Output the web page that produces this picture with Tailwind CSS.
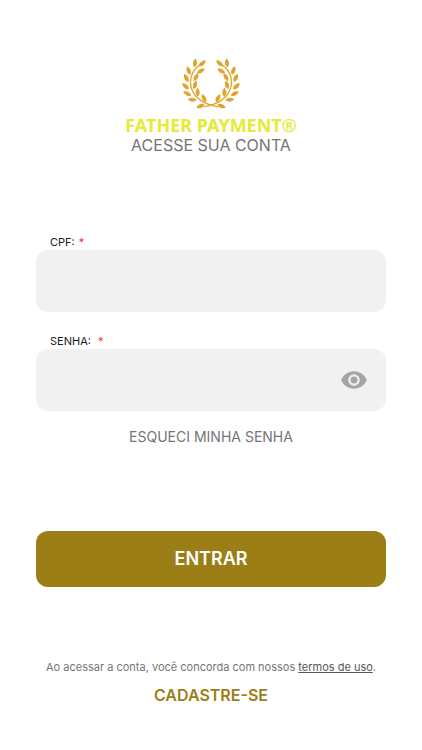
<!DOCTYPE html>
<html lang="pt-BR">
<head>
<meta charset="utf-8">
<meta name="viewport" content="width=device-width, initial-scale=1">
<title>Father Payment</title>
<script src="https://cdn.jsdelivr.net/npm/@tailwindcss/browser@4"></script>
</head>
<body class="bg-white font-['Inter','Liberation_Sans',sans-serif] text-[#757575]">
<main class="flex min-h-screen flex-col px-9 pt-[52px] pb-10">
  <header class="flex flex-col items-center">
    <svg class="h-[62px] w-[70px]" viewBox="0 0 210 186" fill="#dfa52f" aria-hidden="true">
      <defs>
        <path id="leaf" d="M0 13C-8 6-8-5 0-14C8-5 8 6 0 13Z"/>
        <g id="branch">
          <path d="M124 164C87 157 58 141 47 111C38 86 46 57 71 39" fill="none" stroke="#dfa52f" stroke-width="4" stroke-linecap="round"/>
          <use href="#leaf" transform="translate(79 34) rotate(48)"/>
          <use href="#leaf" transform="translate(57 33) rotate(8)"/>
          <use href="#leaf" transform="translate(74 57) rotate(60)"/>
          <use href="#leaf" transform="translate(38 56) rotate(-20)"/>
          <use href="#leaf" transform="translate(60 76) rotate(30)"/>
          <use href="#leaf" transform="translate(31 78) rotate(-28)"/>
          <use href="#leaf" transform="translate(57 99) rotate(15)"/>
          <use href="#leaf" transform="translate(29 103) rotate(-48)"/>
          <use href="#leaf" transform="translate(65 121) rotate(-2)"/>
          <use href="#leaf" transform="translate(34 125) rotate(-63)"/>
          <use href="#leaf" transform="translate(84 139) rotate(-28)"/>
          <use href="#leaf" transform="translate(49 143) rotate(-86)"/>
          <use href="#leaf" transform="translate(74 162) rotate(-112)"/>
        </g>
      </defs>
      <use href="#branch"/>
      <use href="#branch" transform="translate(210 0) scale(-1 1)"/>
    </svg>
    <p class="font-['Noto_Sans',sans-serif] text-[18px] leading-[22px] font-bold text-[#e5ea36]">FATHER PAYMENT®</p>
    <h1 class="text-base leading-[18px]">ACESSE SUA CONTA</h1>
  </header>

  <form class="mt-[76px] flex flex-col">
    <label for="cpf" class="flex gap-1 px-[14px] pt-1 text-[11px] leading-4 text-[#202020]">CPF: <span class="text-red-500">*</span></label>
    <input id="cpf" type="text" class="h-[62px] w-full rounded-xl bg-[#f1f1f1] px-4 outline-none">

    <label for="senha" class="mt-[17px] flex gap-[7px] px-[14px] pt-1 text-[11px] leading-4 text-[#202020]">SENHA: <span class="text-red-500">*</span></label>
    <div class="flex h-[62px] items-center rounded-xl bg-[#f1f1f1] pr-[18px]">
      <input id="senha" type="password" class="h-full min-w-0 flex-1 bg-transparent px-4 outline-none">
      <button type="button" aria-label="Mostrar senha" class="text-[#a5a5a5]">
        <svg class="size-7" viewBox="0 0 24 24" fill="currentColor"><path d="M12 4.500C7 4.500 2.730 7.610 1 12c1.730 4.390 6 7.500 11 7.500s9.270-3.110 11-7.500c-1.730-4.390-6-7.500-11-7.500zM12 17a5 5 0 1 1 0-10 5 5 0 0 1 0 10zm0-8a3 3 0 1 0 0 6 3 3 0 0 0 0-6z"/></svg>
      </button>
    </div>
    <a href="#" class="mt-4 self-center text-sm leading-5">ESQUECI MINHA SENHA</a>
    <button type="submit" class="mt-[84px] h-14 w-full rounded-xl bg-[#9b7e15] text-lg font-semibold text-white">ENTRAR</button>
  </form>

  <footer class="mt-[72px] flex flex-col items-center text-center">
    <p class="text-[11px] leading-4">Ao acessar a conta, você concorda com nossos <a href="#" class="text-[#555] underline">termos de uso</a>.</p>
    <a href="#" class="mt-2 text-base leading-6 font-semibold text-[#9b7e15]">CADASTRE-SE</a>
  </footer>
</main>
</body>
</html>
